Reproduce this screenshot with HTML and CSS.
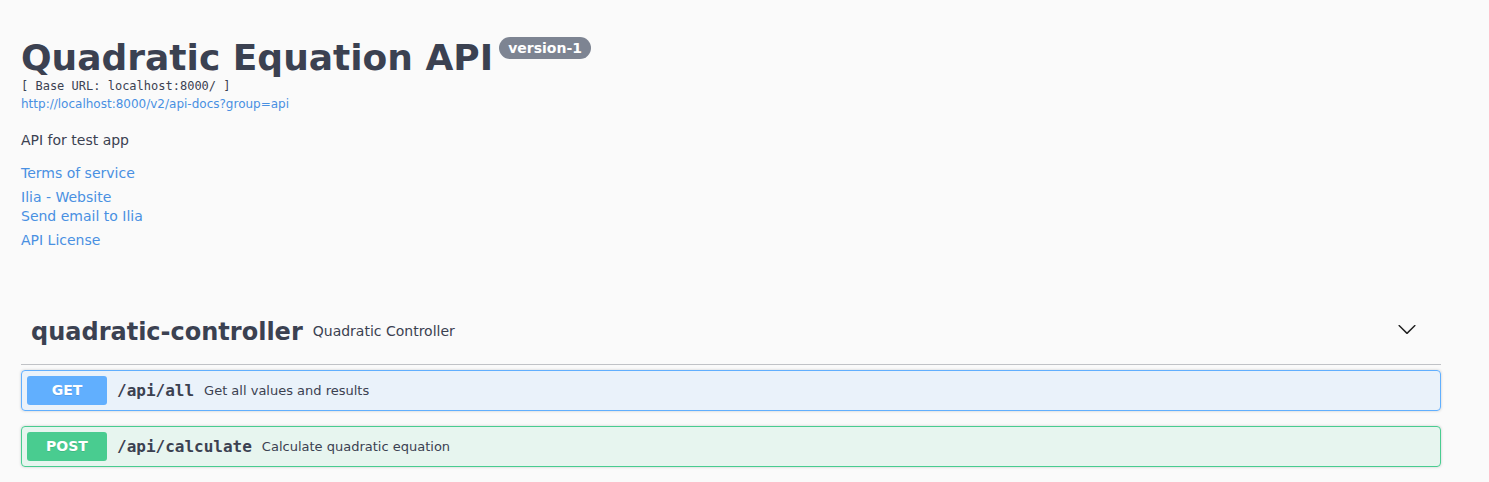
FILE: index.html
```html
<!DOCTYPE html>
<html lang="en">
<head>
<meta charset="utf-8">
<title>Quadratic Equation API</title>
<link rel="stylesheet" href="styles.css">
</head>
<body>
<div class="page">
  <section class="info">
    <div class="title-row">
      <h2 class="title">Quadratic Equation API</h2>
      <span class="version">version-1</span>
    </div>
    <pre class="base-url">[ Base URL: localhost:8000/ ]</pre>
    <a class="spec-link" href="#">http://localhost:8000/v2/api-docs?group=api</a>
    <p class="desc">API for test app</p>
    <a class="info-link tos" href="#">Terms of service</a>
    <div class="contact">
      <a class="info-link" href="#">Ilia - Website</a>
      <a class="info-link" href="#">Send email to Ilia</a>
    </div>
    <a class="info-link license" href="#">API License</a>
  </section>
  <section class="tag-section">
    <h4 class="tag">
      <span class="tag-name">quadratic-controller</span>
      <small class="tag-desc">Quadratic Controller</small>
      <svg class="arrow" viewBox="0 0 20 20" width="20" height="20"><path d="M17.418 6.109c.272-.268.709-.268.979 0s.271.701 0 .969l-7.908 7.83c-.27.268-.707.268-.979 0l-7.908-7.830c-.27-.268-.27-.701 0-.969.271-.268.709-.268.979 0L10 13.25l7.418-7.141z" fill="#1f1f1f"/></svg>
    </h4>
    <div class="opblock get">
      <span class="method">GET</span>
      <span class="path">/api/all</span>
      <span class="summary">Get all values and results</span>
    </div>
    <div class="opblock post">
      <span class="method">POST</span>
      <span class="path">/api/calculate</span>
      <span class="summary">Calculate quadratic equation</span>
    </div>
  </section>
</div>
</body>
</html>
```
FILE: styles.css
```css
body {
  margin: 0;
  background: #fafafa;
  font-family: "DejaVu Sans", sans-serif;
  color: #3b4151;
}
.page {
  width: 1420px;
  margin-left: 21px;
  padding-top: 37px;
}
.title-row {
  display: flex;
  align-items: flex-start;
}
.title {
  margin: 0;
  font-size: 36px;
  line-height: 42px;
  font-weight: 700;
  color: #3b4151;
}
.version {
  margin-left: 6px;
  background: #7d8492;
  color: #fff;
  font-weight: 700;
  font-size: 14px;
  line-height: 16px;
  padding: 3px 9px;
  border-radius: 57px;
}
.base-url {
  margin: 0;
  font-family: "DejaVu Sans Mono", monospace;
  font-size: 12px;
  line-height: 14px;
  color: #3b4151;
}
.spec-link {
  display: block;
  margin-top: 4px;
  font-size: 12px;
  line-height: 14px;
  color: #4990e2;
  text-decoration: none;
}
.desc {
  margin: 20px 0 0;
  font-size: 14px;
  line-height: 19px;
}
.info-link {
  display: block;
  font-size: 14px;
  line-height: 19px;
  color: #4990e2;
  text-decoration: none;
}
.tos { margin-top: 14px; }
.contact { margin-top: 5px; }
.license { margin-top: 5px; }
.tag-section {
  margin-top: 58px;
}
.tag {
  display: flex;
  align-items: center;
  margin: 0 0 5px;
  padding: 10px 20px 18px 10px;
  border-bottom: 1px solid rgba(59, 65, 81, .3);
  font-size: 24px;
  line-height: 28px;
  font-weight: 700;
  color: #3b4151;
}
.tag-desc {
  flex: 1;
  padding: 0 10px 2px;
  font-size: 14px;
  font-weight: 400;
  line-height: 16px;
}
.arrow {
  width: 20px;
  height: 20px;
  margin-right: 4px;
  margin-bottom: 6px;
}
.opblock {
  display: flex;
  align-items: center;
  padding: 5px;
  border: 1px solid;
  border-radius: 4px;
  box-shadow: 0 0 3px rgba(0, 0, 0, .19);
  margin-bottom: 15px;
}
.opblock.get {
  border-color: #61affe;
  background: rgba(97, 175, 254, .1);
}
.opblock.post {
  border-color: #49cc90;
  background: rgba(73, 204, 144, .1);
}
.method {
  min-width: 80px;
  padding: 6px 0;
  text-align: center;
  font-size: 14px;
  line-height: 17px;
  font-weight: 700;
  color: #fff;
  border-radius: 3px;
  text-shadow: 0 1px 0 rgba(0, 0, 0, .1);
}
.get .method { background: #61affe; }
.post .method { background: #49cc90; }
.path {
  padding: 0 10px;
  font-family: "DejaVu Sans Mono", monospace;
  font-size: 16px;
  font-weight: 700;
  line-height: 20px;
  color: #3b4151;
}
.summary {
  font-size: 13px;
  color: #3b4151;
}
```
